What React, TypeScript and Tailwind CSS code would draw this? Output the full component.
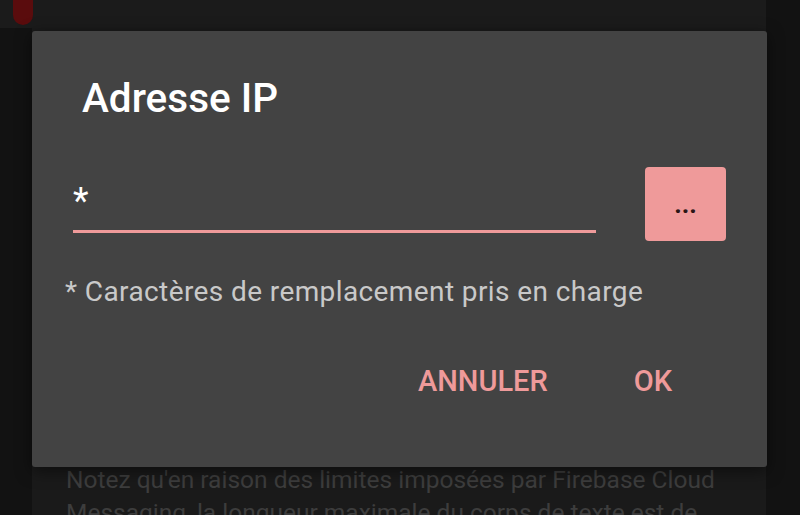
const font = { fontFamily: 'Roboto, "Noto Sans", sans-serif' }

export default function App() {
  return (
    <div className="relative h-[515px] w-[800px] overflow-hidden bg-[#121212]" style={font}>
      {/* page behind the dialog */}
      <div className="flex h-[28px] w-[766px] bg-[#1b1b1b]">
        <div className="ml-[13px] h-[25px] w-[20px] rounded-b-[10px] bg-[#5a0c0d]" />
      </div>
      <div className="ml-[32px] h-[487px] w-[734px] bg-[#1a1a1a] pl-[34px] pt-[435px]">
        <p className="w-[670px] text-[24.5px] leading-[33px] text-[#3d3d3d]">
          Notez qu'en raison des limites imposées par Firebase Cloud Messaging, la longueur maximale du corps de texte est de
        </p>
      </div>

      {/* dialog */}
      <div className="absolute left-[32px] top-[31px] flex h-[436px] w-[735px] flex-col rounded-[3px] bg-[#434343] shadow-[0_4px_16px_rgba(0,0,0,0.5)]">
        <h2 className="ml-[50px] mt-[43px] text-[40.5px] font-medium leading-[48px] text-white">Adresse IP</h2>

        <div className="ml-[41px] mr-[41px] mt-[45px] flex items-start gap-[49px]">
          <div className="flex h-[66px] flex-1 items-end border-b-[3px] border-[#ef9a9a] pb-[11px]">
            <span className="text-[36px] leading-[36px] text-white">*</span>
          </div>
          <button className="flex h-[74px] w-[81px] items-center justify-center rounded-[4px] bg-[#ef9a9a] text-[26px] font-bold leading-none text-[#2a1515]">
            ...
          </button>
        </div>

        <p className="ml-[33px] mt-[35px] text-[28px] leading-[32px] tracking-[0.4px] text-[#c9c9c9]">
          * Caractères de remplacement pris en charge
        </p>

        <div className="mr-[95px] mt-[55px] flex justify-end gap-[86px]">
          <span className="text-[29px] font-medium leading-[36px] text-[#ef9a9a]">ANNULER</span>
          <span className="text-[29px] font-medium leading-[36px] text-[#ef9a9a]">OK</span>
        </div>
      </div>
    </div>
  )
}
